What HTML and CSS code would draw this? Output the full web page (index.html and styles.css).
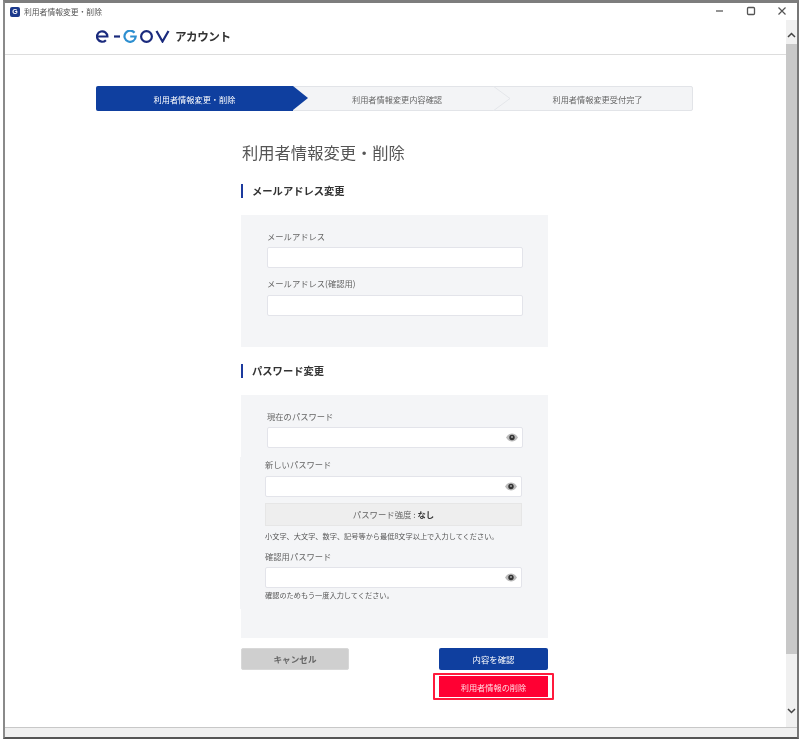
FILE: index.html
```html
<!DOCTYPE html>
<html lang="ja">
<head>
<meta charset="utf-8">
<title>利用者情報変更・削除</title>
<link rel="stylesheet" href="styles.css">
</head>
<body>
<div class="window">
  <div class="titlebar">
    <span class="app-icon">G</span>
    <span class="app-title">利用者情報変更・削除</span>
    <span class="win-controls">
      <svg class="win-btn" width="10" height="10" viewBox="0 0 10 10"><path d="M1 5h7" stroke="#666" stroke-width="1.4"/></svg>
      <svg class="win-btn" width="10" height="10" viewBox="0 0 10 10"><rect x="1.5" y="1.5" width="7" height="7" rx="1" fill="none" stroke="#555" stroke-width="1.3"/></svg>
      <svg class="win-btn" width="10" height="10" viewBox="0 0 10 10"><path d="M1.5 1.5l7 7M8.5 1.5l-7 7" stroke="#555" stroke-width="1.2"/></svg>
    </span>
  </div>
  <div class="viewport">
    <div class="page">
      <header class="site-header">
        <svg class="logo" width="75" height="13" viewBox="0 0 75 13" role="img" aria-label="e-GOV">
          <g fill="none" stroke-width="2.2">
            <path d="M1 6.5h10.4a5.2 5.2 0 1 0-1.5 3.7" stroke="#1a2a7d"/>
            <path d="M18 6.5h6" stroke="#1a2a7d"/>
            <path d="M38.5 2.8a5.6 5.6 0 1 0 1.2 3.7h-5.5" stroke="#2d8fd0"/>
            <circle cx="50.5" cy="6.5" r="5.4" stroke="#1a2a7d"/>
            <path d="M60.5 1l6 10.5 6-10.5" stroke="#1a2a7d"/>
          </g>
        </svg>
        <span class="logo-sub">アカウント</span>
      </header>
      <ol class="stepper">
        <li class="step step-active">利用者情報変更・削除</li>
        <li class="step step-mid">利用者情報変更内容確認
          <svg class="step-chevron" width="17" height="25" viewBox="0 0 17 25"><path d="M0 0l17 12.5L0 25" fill="none" stroke="#e4e6ea"/></svg>
        </li>
        <li class="step step-last">利用者情報変更受付完了</li>
      </ol>
      <main class="content">
        <h1 class="page-title">利用者情報変更・削除</h1>
        <h2 class="section-head">メールアドレス変更</h2>
        <section class="panel panel-mail">
          <label class="label">メールアドレス</label>
          <div class="input"></div>
          <label class="label label-next">メールアドレス(確認用)</label>
          <div class="input"></div>
        </section>
        <h2 class="section-head section-pass">パスワード変更</h2>
        <section class="panel panel-pass">
          <label class="label">現在のパスワード</label>
          <div class="input">
            <svg class="eye" width="12" height="9" viewBox="0 0 12 9"><path d="M0 4.5C2 1.4 4 .5 6 .5s4 .9 6 4c-2 3.1-4 4-6 4s-4-.9-6-4z" fill="#bbb"/><circle cx="6" cy="4.5" r="2.7" fill="#333"/><path d="M5 3.4h2v1H5z" fill="#ddd"/></svg>
          </div>
          <div class="shifted">
            <label class="label">新しいパスワード</label>
            <div class="input input-new">
              <svg class="eye" width="12" height="9" viewBox="0 0 12 9"><path d="M0 4.5C2 1.4 4 .5 6 .5s4 .9 6 4c-2 3.1-4 4-6 4s-4-.9-6-4z" fill="#bbb"/><circle cx="6" cy="4.5" r="2.7" fill="#333"/><path d="M5 3.4h2v1H5z" fill="#ddd"/></svg>
            </div>
            <div class="strength">パスワード強度 : <b>なし</b></div>
            <p class="help help-first">小文字、大文字、数字、記号等から最低8文字以上で入力してください。</p>
            <label class="label label-confirm">確認用パスワード</label>
            <div class="input input-confirm">
              <svg class="eye" width="12" height="9" viewBox="0 0 12 9"><path d="M0 4.5C2 1.4 4 .5 6 .5s4 .9 6 4c-2 3.1-4 4-6 4s-4-.9-6-4z" fill="#bbb"/><circle cx="6" cy="4.5" r="2.7" fill="#333"/><path d="M5 3.4h2v1H5z" fill="#ddd"/></svg>
            </div>
            <p class="help help-second">確認のためもう一度入力してください。</p>
          </div>
        </section>
        <div class="actions">
          <button class="btn btn-cancel" type="button">キャンセル</button>
          <div class="actions-right">
            <button class="btn btn-primary" type="button">内容を確認</button>
            <div class="delete-frame"><button class="btn btn-delete" type="button">利用者情報の削除</button></div>
          </div>
        </div>
      </main>
    </div>
    <div class="scrollbar">
      <svg class="sb-arrow" width="9" height="6" viewBox="0 0 9 6"><path d="M1 5l3.5-3.5L8 5" fill="none" stroke="#444" stroke-width="1.5"/></svg>
      <div class="sb-thumb"></div>
      <svg class="sb-arrow sb-arrow-down" width="9" height="6" viewBox="0 0 9 6"><path d="M1 1l3.5 3.5L8 1" fill="none" stroke="#444" stroke-width="1.5"/></svg>
    </div>
  </div>
  <div class="statusbar"></div>
</div>
</body>
</html>
```
FILE: styles.css
```css
* { box-sizing: border-box; }
html, body { margin: 0; padding: 0; background: #fff; }
body { font-family: "Noto Sans CJK JP", "Noto Sans", sans-serif; width: 800px; height: 739px; overflow: hidden; padding-left: 3px; }
.window { width: 796px; height: 739px; border-top: 3px solid #7d7d7d; border-left: 2px solid #8a8a8a; border-right: 2px solid #777; border-bottom: 2px solid #555; background: #fff; display: flex; flex-direction: column; filter: blur(.4px); }
.titlebar { height: 17px; flex: none; display: flex; align-items: center; padding-left: 5px; }
.app-icon { width: 10px; height: 10px; background: #1c3a8c; color: #fff; border-radius: 2px; font: bold 7px/10px "Liberation Sans", sans-serif; text-align: center; }
.app-title { font-size: 7.8px; color: #555; margin-left: 4px; line-height: 10px; }
.win-controls { margin-left: auto; display: flex; gap: 21px; margin-right: 10px; margin-top: -1px; }
.win-btn { display: block; }
.viewport { flex: 1; display: flex; min-height: 0; }
.page { flex: 1; min-width: 0; }
.site-header { height: 35px; border-bottom: 1px solid #ddd; display: flex; align-items: flex-start; padding-left: 91px; }
.logo { margin-top: 10px; flex: none; }
.logo-sub { font-size: 11.6px; font-weight: 700; color: #333; margin-left: 4px; margin-top: 7px; line-height: 18px; letter-spacing: -.5px; }
.stepper { list-style: none; margin: 31px 0 0 91px; padding: 0; width: 597px; height: 25px; display: flex; background: #f3f4f6; border: 1px solid #e2e4e8; border-radius: 2px; font-size: 8.2px; }
.step { display: flex; align-items: center; justify-content: center; color: #666; height: 100%; }
.step-active { width: 197px; background: #0f3f9f; color: #fff; position: relative; margin: -1px 0 -1px -1px; height: 25px; border-radius: 2px 0 0 2px; }
.step-active::after { content: ""; position: absolute; left: 100%; top: 0; border-left: 15px solid #0f3f9f; border-top: 12.5px solid transparent; border-bottom: 12.5px solid transparent; }
.step-mid { width: 200px; padding-left: 8px; position: relative; }
.step-chevron { position: absolute; left: 100%; top: -1px; }
.step-last { flex: 1; padding-left: 10px; }
.content { margin-left: 236px; width: 307px; }
.page-title { font-size: 16.3px; font-weight: 400; color: #555; margin: 29px 0 0 1px; padding-bottom: 1px; line-height: 24px; white-space: nowrap; }
.section-head { font-size: 10.3px; font-weight: 700; color: #333; margin: 19px 0 0; height: 14px; line-height: 14px; border-left: 2px solid #1c3a9e; padding-left: 9px; }
.section-pass { margin-top: 17px; }
.panel { background: #f4f5f7; margin-top: 17px; padding: 14px 25px 0 26px; }
.panel-mail { height: 132px; }
.panel-pass { height: 243px; }
.label { display: block; font-size: 8.3px; color: #666; line-height: 14px; white-space: nowrap; }
.label-next { margin-top: 8px; }
.input { height: 21px; margin-top: 4px; background: #fff; border: 1px solid #e3e4ea; border-radius: 2px; position: relative; }
.label-next + .input { margin-top: 5px; }
.eye { position: absolute; right: 4px; top: 5px; }
.shifted { margin: 9px -24px 0 -27px; padding: 0 25px 9px; background: #f4f5f7; }
.input-new { margin-top: 5px; }
.strength { height: 23px; margin-top: 6px; background: #eeeeee; border: 1px solid #e6e6e6; text-align: center; font-size: 8.4px; line-height: 21px; color: #666; }
.strength b { color: #333; }
.help { font-size: 7.2px; line-height: 10px; color: #555; margin: 0; white-space: nowrap; }
.help-first { margin-top: 5px; }
.label-confirm { margin-top: 8px; }
.input-confirm { margin-top: 4px; }
.help-second { margin-top: 2px; }
.actions { display: flex; justify-content: space-between; margin-top: 10px; }
.actions-right { width: 109px; position: relative; }
.btn { display: block; border: 0; padding: 0; height: 22px; width: 108px; font-family: inherit; font-size: 8.4px; border-radius: 2px; }
.btn-cancel { background: #cfcfcf; color: #666; font-weight: 700; font-size: 8.6px; border: 1px solid #d8d8d8; }
.btn-primary { background: #0f3f9f; color: #fff; width: 109px; }
.delete-frame { position: absolute; left: -6px; top: 25px; width: 121px; height: 27px; border: 2px solid #ff1a3c; background: #fff; padding: 1px 4px; border-radius: 1px; }
.btn-delete { background: #ff0033; color: #ffd9e0; width: 109px; height: 21px; border-radius: 0; font-size: 8.2px; }
.scrollbar { width: 11px; flex: none; background: #f0f0f0; display: flex; flex-direction: column; align-items: center; }
.sb-arrow { flex: none; margin: 12px 0 6px; display: block; }
.sb-arrow-down { margin: 54px 0 0; }
.sb-thumb { flex: none; width: 100%; height: 610px; background: #c8c8c8; }
.statusbar { height: 10px; flex: none; background: #f0f0f0; border-top: 1px solid #c8c8c8; }
```
